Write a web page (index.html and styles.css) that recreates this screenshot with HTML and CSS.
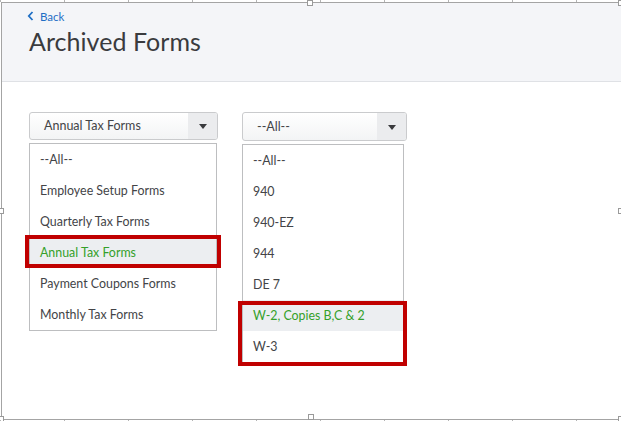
FILE: index.html
```html
<!DOCTYPE html>
<html>
<head>
<meta charset="utf-8">
<link rel="stylesheet" href="styles.css">
</head>
<body>
<div class="frame">
  <header class="header">
    <a class="back" href="#">
      <svg class="chev" width="7" height="10" viewBox="0 0 7 10"><path d="M5.5 1 L1.8 5 L5.5 9" fill="none" stroke="#1f6fc5" stroke-width="1.8"/></svg>
      <span>Back</span>
    </a>
    <h1 class="title">Archived Forms</h1>
  </header>
  <main class="content">
    <div class="col col-cat">
      <div class="select">
        <span class="select-label">Annual Tax Forms</span>
        <span class="select-arrow"><i class="tri"></i></span>
      </div>
      <ul class="list">
        <li class="item">--All--</li>
        <li class="item">Employee Setup Forms</li>
        <li class="item">Quarterly Tax Forms</li>
        <li class="item selected marked">Annual Tax Forms</li>
        <li class="item">Payment Coupons Forms</li>
        <li class="item">Monthly Tax Forms</li>
      </ul>
    </div>
    <div class="col col-form">
      <div class="select select-tall">
        <span class="select-label">--All--</span>
        <span class="select-arrow"><i class="tri"></i></span>
      </div>
      <ul class="list list-form">
        <li class="item">--All--</li>
        <li class="item">940</li>
        <li class="item">940-EZ</li>
        <li class="item">944</li>
        <li class="item">DE 7</li>
        <li class="group">
          <div class="item selected">W-2, Copies B,C &amp; 2</div>
          <div class="item">W-3</div>
        </li>
      </ul>
    </div>
  </main>
  <span class="handle h-tm"></span>
  <span class="handle h-tr"></span>
  <span class="handle h-ml"></span>
  <span class="handle h-mr"></span>
  <span class="handle h-bl"></span>
  <span class="handle h-bm"></span>
  <span class="handle h-br"></span>
</div>
</body>
</html>
```

FILE: styles.css
```css
* { box-sizing: border-box; }
html, body {
  margin: 0;
  padding: 0;
  width: 621px;
  height: 421px;
  overflow: hidden;
  background: #fff;
  font-family: "Lato", "Open Sans", "Liberation Sans", sans-serif;
  color: #393a3d;
}
.frame {
  position: relative;
  margin: 2px 0 0 1px;
  height: 418px;
  border-top: 1px solid #a4a4a4;
  border-left: 1px solid #a4a4a4;
  border-bottom: 1px solid #a4a4a4;
}
.frame::before,
.frame::after {
  content: "";
  position: absolute;
  left: -2px;
  width: 621px;
  height: 2px;
  background-image: linear-gradient(to right, #b4b4b4 0 1px, transparent 1px);
  background-size: 64px 2px;
}
.frame::before { top: -3px; }
.frame::after { bottom: -3px; }

.header {
  background: #f4f5f8;
  height: 79px;
  border-bottom: 1px solid #dfe1e5;
  padding: 5px 0 0 25px;
}
.back {
  display: flex;
  align-items: center;
  gap: 6px;
  height: 16px;
  font-size: 11.5px;
  color: #1f6fc5;
  text-decoration: none;
}
.chev { display: block; }
.title {
  margin: 2px 0 0 2px;
  font-size: 25px;
  line-height: 30px;
  font-weight: 400;
  color: #3a3b3e;
  letter-spacing: 0.05px;
}

.content {
  display: flex;
  gap: 24px;
  padding: 30px 0 0 27px;
}
.col-cat { width: 189px; }
.col-form { width: 165px; }

.select {
  display: flex;
  height: 28px;
  border: 1px solid #cacbcd;
  border-radius: 3px;
  background: linear-gradient(#ffffff, #f3f4f5);
  overflow: hidden;
}
.select-tall { height: 29px; }
.select-label {
  flex: 1;
  padding-left: 14px;
  font-size: 12.5px;
  line-height: 26px;
  color: #434447;
}
.select-tall .select-label { line-height: 28px; }
.select-arrow {
  width: 29px;
  display: flex;
  align-items: center;
  justify-content: center;
  background: #ebecee;
}
.tri {
  width: 0;
  height: 0;
  border-left: 4px solid transparent;
  border-right: 4px solid transparent;
  border-top: 5px solid #393a3d;
  margin-top: 1px;
}

.list {
  list-style: none;
  margin: 3px 0 0;
  padding: 0;
  width: 188px;
  border: 1px solid #bdbec0;
  background: #fff;
}
.list-form {
  width: 162px;
  margin-top: 3px;
}
.item {
  position: relative;
  height: 31px;
  line-height: 31px;
  padding-left: 10px;
  font-size: 12.4px;
  color: #434447;
  white-space: nowrap;
}
.item.selected {
  background: #eceef1;
  color: #34a02a;
}
.marked::after {
  content: "";
  position: absolute;
  top: -2px;
  bottom: 0;
  left: -5px;
  right: -5px;
  border: 4px solid #c00000;
}
.group { position: relative; }
.group::after {
  content: "";
  position: absolute;
  top: 1px;
  bottom: -4px;
  left: -5px;
  right: -4px;
  border: 4px solid #c00000;
}

.handle {
  position: absolute;
  width: 6px;
  height: 6px;
  background: #fff;
  border: 1px solid #9a9a9a;
}
.h-tm { top: -3px; left: 305px; }
.h-tr { top: -3px; right: -3px; }
.h-ml { top: 205px; left: -4px; }
.h-mr { top: 205px; right: -3px; }
.h-bl { bottom: -3px; left: -4px; }
.h-bm { bottom: -1px; left: 306px; }
.h-br { bottom: -3px; right: -3px; }
```
